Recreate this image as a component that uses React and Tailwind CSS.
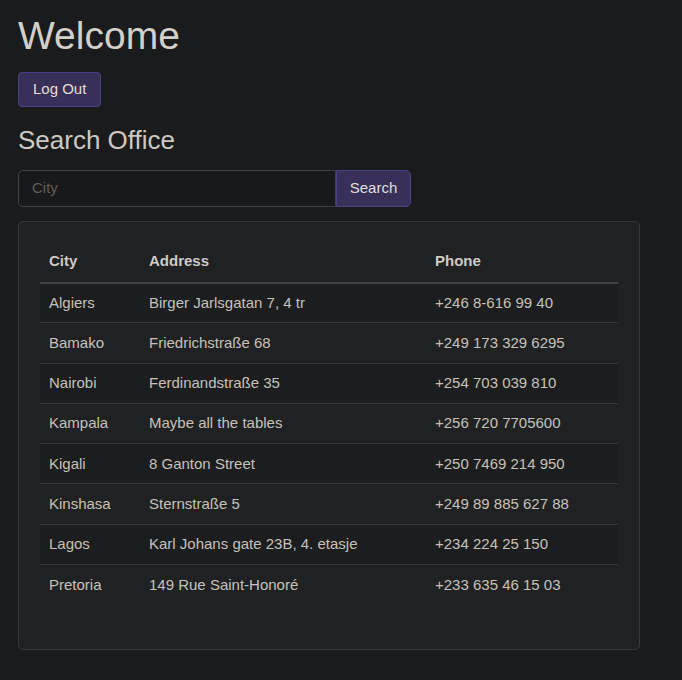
import React from "react";

const rows = [
  ["Algiers", "Birger Jarlsgatan 7, 4 tr", "+246 8-616 99 40"],
  ["Bamako", "Friedrichstraße 68", "+249 173 329 6295"],
  ["Nairobi", "Ferdinandstraße 35", "+254 703 039 810"],
  ["Kampala", "Maybe all the tables", "+256 720 7705600"],
  ["Kigali", "8 Ganton Street", "+250 7469 214 950"],
  ["Kinshasa", "Sternstraße 5", "+249 89 885 627 88"],
  ["Lagos", "Karl Johans gate 23B, 4. etasje", "+234 224 25 150"],
  ["Pretoria", "149 Rue Saint-Honoré", "+233 635 46 15 03"],
];

export default function App() {
  return (
    <div
      className="min-h-[680px] bg-[#1a1b1d] text-[#d0ccc5] px-[18px] pt-[12px]"
      style={{ fontFamily: '"Liberation Sans", Arial, sans-serif' }}
    >
      <h1 className="text-[39px] leading-[48px] text-[#d3cfc9]">Welcome</h1>
      <button className="mt-[12px] h-[35px] px-[14px] rounded-[4px] bg-[#383058] border border-[#4a4189] text-[15px] text-[#e2ded8]">
        Log Out
      </button>
      <h3 className="mt-[17px] text-[26px] leading-[32px] text-[#cdc9c2]">Search Office</h3>
      <div className="mt-[14px] flex w-[393px] h-[37px]">
        <input
          placeholder="City"
          className="flex-1 min-w-0 bg-[#18191a] border border-[#3f4246] rounded-l-[5px] px-[13px] text-[15px] text-[#d0ccc5] placeholder-[#5f5d59] outline-none"
        />
        <button className="w-[75px] bg-[#383058] border border-[#4a4189] rounded-r-[5px] text-[15px] text-[#e2ded8]">
          Search
        </button>
      </div>
      <div className="mt-[14px] w-[622px] bg-[#1f2123] border border-[#36393c] rounded-[5px] px-[21px] pt-[18px] pb-[44px]">
        <table className="w-full text-[15px] border-collapse">
          <thead>
            <tr className="border-b-2 border-[#3e4246]">
              <th className="text-left font-bold px-[9px] pt-[10px] pb-[9px] w-[100px] text-[#cfcac3]">City</th>
              <th className="text-left font-bold px-[9px] pt-[10px] pb-[9px] w-[286px] text-[#cfcac3]">Address</th>
              <th className="text-left font-bold px-[9px] pt-[10px] pb-[9px] text-[#cfcac3]">Phone</th>
            </tr>
          </thead>
          <tbody>
            {rows.map((r, i) => (
              <tr
                key={i}
                className={
                  (i % 2 === 0 ? "bg-[#1b1d1e] " : "") +
                  (i < rows.length - 1 ? "border-b border-[#35383b]" : "")
                }
              >
                {r.map((c, j) => (
                  <td key={j} className="px-[9px] h-[40.25px] leading-[20px] align-middle text-[#c6c1ba]">
                    {c}
                  </td>
                ))}
              </tr>
            ))}
          </tbody>
        </table>
      </div>
    </div>
  );
}
